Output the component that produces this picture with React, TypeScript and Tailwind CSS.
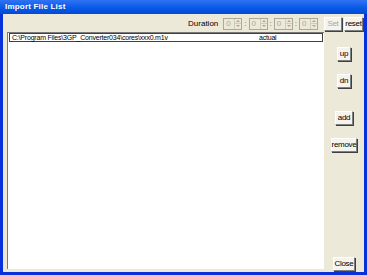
import React from "react";

const F = { fontFamily: '"Liberation Sans", Arial, sans-serif' };

function Btn({ label, w, disabled }: { label: string; w: string; disabled?: boolean }) {
  return (
    <div
      className={`${w} h-[14px] flex items-center justify-center bg-[#f4f3ee] border border-[#7f7f7f] border-t-white border-l-white shadow-[1px_1px_0_#404040] text-[8px] leading-none tracking-[-0.3px] ${disabled ? "text-[#aca899]" : "text-black"}`}
    >
      {label}
    </div>
  );
}

function Spin() {
  return (
    <div className="w-[19px] h-[12px] flex items-center border border-[#aca899] bg-[#ece9d8]">
      <span className="text-[8px] leading-none text-[#aca899] pl-[2px] flex-1">0</span>
      <div className="flex flex-col w-[7px] h-full border-l border-[#cfcbbd]">
        <div className="flex-1 border-b border-[#cfcbbd] flex items-center justify-center">
          <div className="w-0 h-0 border-l-[2px] border-r-[2px] border-b-[2px] border-l-transparent border-r-transparent border-b-[#aca899]" />
        </div>
        <div className="flex-1 flex items-center justify-center">
          <div className="w-0 h-0 border-l-[2px] border-r-[2px] border-t-[2px] border-l-transparent border-r-transparent border-t-[#aca899]" />
        </div>
      </div>
    </div>
  );
}

export default function App() {
  return (
    <div className="w-[367px] h-[275px] flex flex-col bg-[#0831d9] overflow-hidden" style={F}>
      <div className="h-[14px] flex items-center px-[5px] bg-gradient-to-b from-[#2f73f3] via-[#0a5ce8] to-[#0349d6]">
        <span className="text-white text-[8px] font-bold leading-none tracking-[0.2px]">Import File List</span>
      </div>
      <div className="flex-1 mx-[3px] mb-[3px] bg-[#ece9d8] flex flex-col">
        <div className="h-[17px] flex items-center justify-end gap-[2px] pr-[1px] pt-[2px]">
          <span className="text-[8px] leading-none mr-[3px] text-black">Duration</span>
          <Spin />
          <span className="text-[8px] leading-none text-[#666]">:</span>
          <Spin />
          <span className="text-[8px] leading-none text-[#666]">:</span>
          <Spin />
          <span className="text-[8px] leading-none text-[#666]">:</span>
          <Spin />
          <div className="w-[2px]" />
          <Btn label="Set" w="w-[18px]" disabled />
          <Btn label="reset" w="w-[19px]" />
        </div>
        <div className="flex-1 flex">
          <div className="ml-[4px] mt-[1px] mb-[3px] w-[317px] bg-white border-l border-[#7a7a7a] border-t border-t-[#7a7a7a] flex flex-col">
            <div className="h-[9px] mx-[1px] border border-[#404040] flex items-center text-[7px] leading-none tracking-[-0.2px]">
              <span className="pl-[2px] w-[249px]">C:\Program Files\3GP_Converter034\cores\xxx0.m1v</span>
              <span>actual</span>
            </div>
          </div>
          <div className="flex-1 flex flex-col items-center pt-[16px] pb-[1px]">
            <Btn label="up" w="w-[14px]" />
            <div className="h-[13px]" />
            <Btn label="dn" w="w-[14px]" />
            <div className="h-[23px]" />
            <Btn label="add" w="w-[18px]" />
            <div className="h-[13px]" />
            <Btn label="remove" w="w-[26px]" />
            <div className="flex-1" />
            <Btn label="Close" w="w-[22px]" />
          </div>
        </div>
      </div>
    </div>
  );
}
